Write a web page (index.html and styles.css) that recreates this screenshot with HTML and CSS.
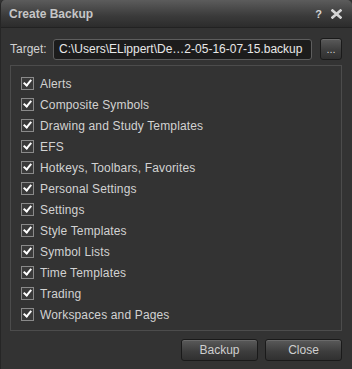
FILE: index.html
```html
<!DOCTYPE html>
<html lang="en">
<head>
    <meta charset="UTF-8">
    <title>Create Backup</title>
    <link rel="stylesheet" href="styles.css">
</head>
<body>
    <div class="dialog">
        <div class="titlebar">
            <span class="title">Create Backup</span>
            <span class="title-buttons">
                <span class="help">?</span>
                <svg class="close-x" width="11" height="10" viewBox="0 0 11 10">
                    <path d="M1.5 1.5 L9.5 8.5 M9.5 1.5 L1.5 8.5" stroke="#d4d4d4" stroke-width="2.6" stroke-linecap="square"/>
                </svg>
            </span>
        </div>

        <div class="content">
            <div class="target-row">
                <label class="target-label">Target:</label>
                <div class="target-input">C:\Users\ELippert\De…2-05-16-07-15.backup</div>
                <button class="button browse">...</button>
            </div>

            <div class="group">
                <div class="item"><span class="check"></span>Alerts</div>
                <div class="item"><span class="check"></span>Composite Symbols</div>
                <div class="item"><span class="check"></span>Drawing and Study Templates</div>
                <div class="item"><span class="check"></span>EFS</div>
                <div class="item"><span class="check"></span>Hotkeys, Toolbars, Favorites</div>
                <div class="item"><span class="check"></span>Personal Settings</div>
                <div class="item"><span class="check"></span>Settings</div>
                <div class="item"><span class="check"></span>Style Templates</div>
                <div class="item"><span class="check"></span>Symbol Lists</div>
                <div class="item"><span class="check"></span>Time Templates</div>
                <div class="item"><span class="check"></span>Trading</div>
                <div class="item"><span class="check"></span>Workspaces and Pages</div>
            </div>

            <div class="actions">
                <button class="button action">Backup</button>
                <button class="button action">Close</button>
            </div>
        </div>
    </div>
</body>
</html>
```

FILE: styles.css
```css
html, body {
    margin: 0;
    padding: 0;
    background-color: #333333;
}
body {
    font-family: "Liberation Sans", Arial, sans-serif;
    font-size: 12px;
    color: #d2d2d2;
}
.dialog {
    width: 352px;
    height: 369px;
    box-sizing: border-box;
    background-color: #333333;
    border-left: 1px solid #262626;
    border-radius: 5px 5px 0 0;
    overflow: hidden;
}
.titlebar {
    height: 28px;
    box-sizing: border-box;
    display: flex;
    align-items: center;
    justify-content: space-between;
    padding: 0 10px 0 8px;
    background: linear-gradient(#5c5c5c, #3a3a3a 60%, #2c2c2c);
    border-bottom: 1px solid #222222;
}
.title {
    font-weight: bold;
    font-size: 12px;
    color: #c6c6c6;
    padding-top: 1px;
}
.title-buttons {
    display: flex;
    align-items: center;
    gap: 9px;
}
.help {
    font-weight: bold;
    font-size: 11px;
    color: #d4d4d4;
}
.content {
    padding: 10px 10px 0 9px;
}
.target-row {
    display: flex;
    align-items: center;
    height: 22px;
}
.target-label {
    width: 43px;
    font-size: 12px;
    color: #d2d2d2;
}
.target-input {
    width: 259px;
    height: 21px;
    box-sizing: border-box;
    line-height: 19px;
    padding-left: 5px;
    font-size: 12px;
    color: #e8e8e8;
    background-color: #1c1c1c;
    border: 1px solid #5e5e5e;
    border-radius: 3px;
    white-space: nowrap;
    overflow: hidden;
}
.button {
    font-family: "Liberation Sans", Arial, sans-serif;
    font-size: 12px;
    color: #cfcfcf;
    background: linear-gradient(#5a5a5a, #3e3e3e 55%, #303030);
    border: 1px solid #1a1a1a;
    border-radius: 3px;
    box-shadow: inset 0 1px 0 #6a6a6a;
    padding: 0;
    cursor: pointer;
}
.browse {
    width: 22px;
    height: 22px;
    margin-left: 8px;
    line-height: 16px;
    font-size: 11px;
}
.group {
    margin-top: 5px;
    height: 266px;
    box-sizing: border-box;
    border: 1px solid #4c4c4c;
    padding: 7px 0 0 10px;
}
.item {
    display: flex;
    align-items: center;
    height: 21px;
    font-size: 12px;
    letter-spacing: 0.15px;
    color: #d2d2d2;
}
.check {
    width: 13px;
    height: 13px;
    box-sizing: border-box;
    margin-right: 6px;
    border: 1px solid #8a8a8a;
    background-color: #3a3a3a;
    position: relative;
}
.check::after {
    content: "";
    position: absolute;
    left: 3px;
    top: 0px;
    width: 3px;
    height: 6px;
    border-right: 2px solid #ffffff;
    border-bottom: 2px solid #ffffff;
    transform: rotate(40deg);
}
.actions {
    display: flex;
    justify-content: flex-end;
    gap: 7px;
    margin-top: 8px;
}
.action {
    width: 77px;
    height: 22px;
}
```
